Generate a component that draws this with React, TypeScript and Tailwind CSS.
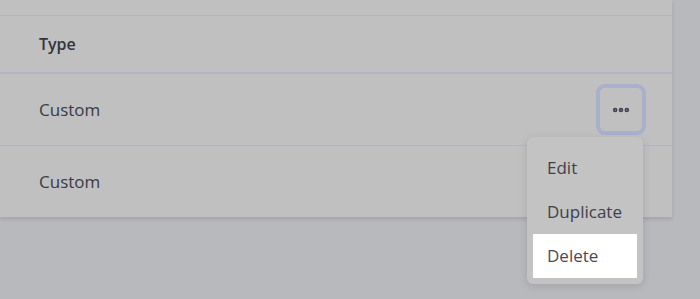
import { MoreHorizontal } from 'lucide-react';

const rows = ['Custom', 'Custom'];

export default function App() {
  return (
    <div
      className="w-[700px] h-[299px] bg-[#b8b9bc] overflow-hidden"
      style={{ fontFamily: '"Open Sans", "Noto Sans", sans-serif' }}
    >
      <div className="relative w-[672px] bg-[#c0c0c0] shadow-[0_2px_4px_rgba(0,0,0,0.12)]">
        <div className="h-[16px] border-b border-[#b2b4bf]" />
        <div className="h-[58px] flex items-center pl-[39px] border-b-2 border-[#b2b4bf] text-[16px] font-semibold text-[#33333b]">
          Type
        </div>
        {rows.map((r, i) => (
          <div
            key={i}
            className={`flex items-center justify-between pl-[39px] pr-[26px] text-[17px] text-[#3a3a44] ${
              i === 0 ? 'h-[72px] border-b border-[#b2b4bf]' : 'h-[71px]'
            }`}
          >
            <span>{r}</span>
            {i === 0 && (
              <button className="w-[50px] h-[51px] flex items-center justify-center rounded-[9px] border-[4px] border-[#a8b0cb]">
                <MoreHorizontal className="w-5 h-5 text-[#3f4152]" strokeWidth={3.5} />
              </button>
            )}
          </div>
        ))}

        <div className="absolute left-[527px] top-[137px] w-[116px] px-[6px] pt-[9px] pb-[6px] rounded-md bg-[#c3c3c3] shadow-[0_2px_8px_rgba(0,0,0,0.12)] text-[17px] text-[#40404a]">
          <div className="h-[44px] flex items-center px-[14px]">Edit</div>
          <div className="h-[44px] flex items-center px-[14px]">Duplicate</div>
          <div className="h-[44px] flex items-center px-[14px] bg-white text-[#4a4a56]">Delete</div>
        </div>
      </div>
    </div>
  );
}
